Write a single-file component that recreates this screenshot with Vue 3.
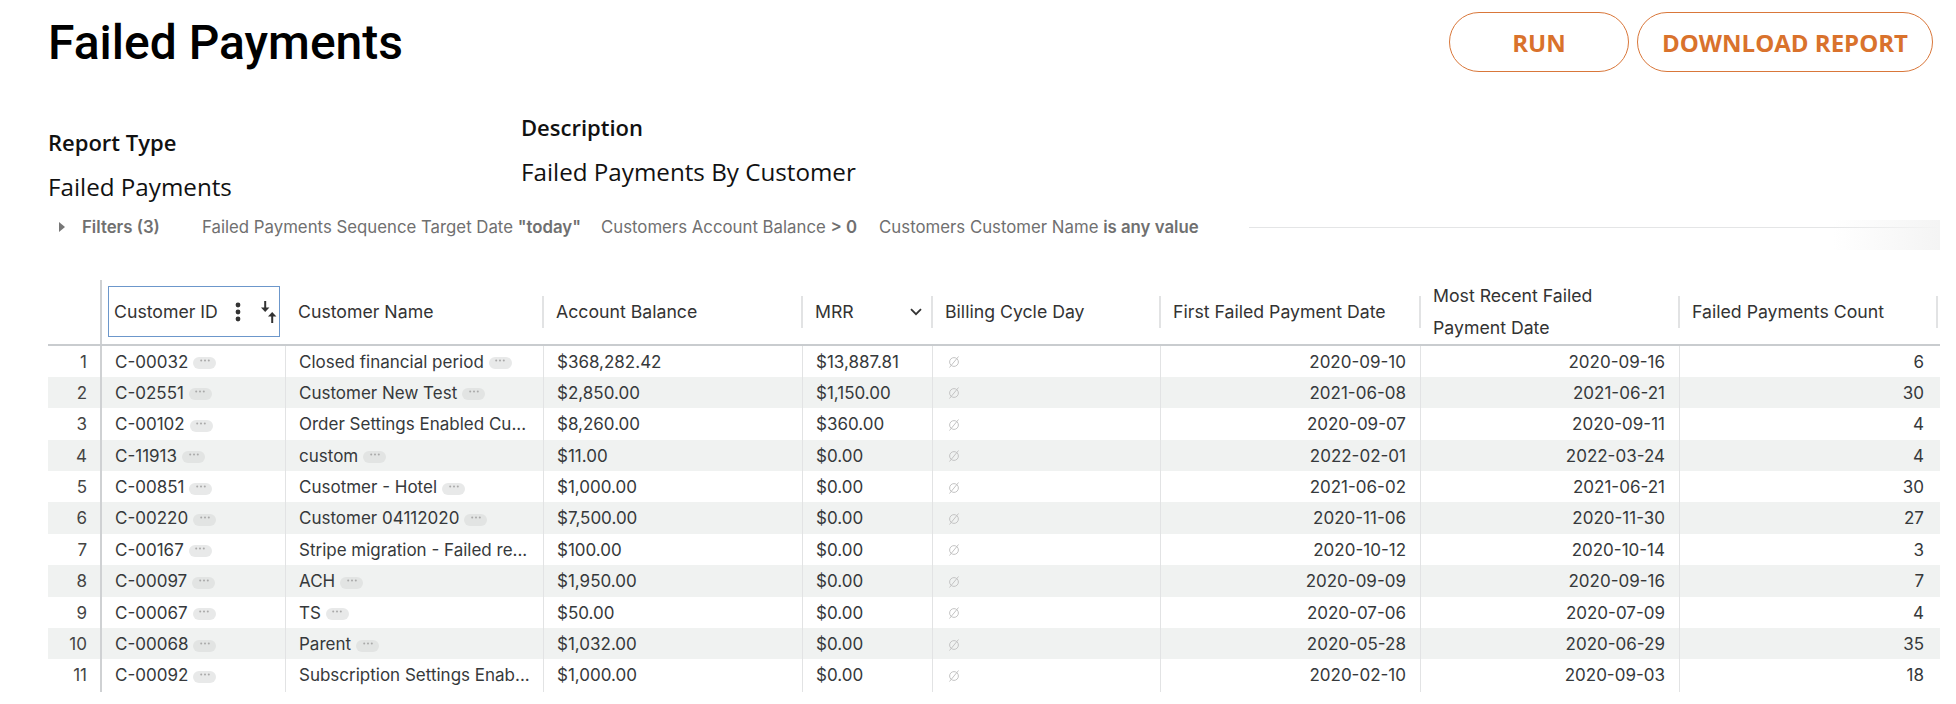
<script setup>
const columns = [
  { label: 'Customer ID' },
  { label: 'Customer Name' },
  { label: 'Account Balance' },
  { label: 'MRR', chevron: true },
  { label: 'Billing Cycle Day' },
  { label: 'First Failed Payment Date' },
  { label: 'Most Recent Failed Payment Date' },
  { label: 'Failed Payments Count' }
]

const rows = [
  ['C-00032', 'Closed financial period', '$368,282.42', '$13,887.81', '2020-09-10', '2020-09-16', 6, true],
  ['C-02551', 'Customer New Test', '$2,850.00', '$1,150.00', '2021-06-08', '2021-06-21', 30, true],
  ['C-00102', 'Order Settings Enabled Cu...', '$8,260.00', '$360.00', '2020-09-07', '2020-09-11', 4, false],
  ['C-11913', 'custom', '$11.00', '$0.00', '2022-02-01', '2022-03-24', 4, true],
  ['C-00851', 'Cusotmer - Hotel', '$1,000.00', '$0.00', '2021-06-02', '2021-06-21', 30, true],
  ['C-00220', 'Customer 04112020', '$7,500.00', '$0.00', '2020-11-06', '2020-11-30', 27, true],
  ['C-00167', 'Stripe migration - Failed re...', '$100.00', '$0.00', '2020-10-12', '2020-10-14', 3, false],
  ['C-00097', 'ACH', '$1,950.00', '$0.00', '2020-09-09', '2020-09-16', 7, true],
  ['C-00067', 'TS', '$50.00', '$0.00', '2020-07-06', '2020-07-09', 4, true],
  ['C-00068', 'Parent', '$1,032.00', '$0.00', '2020-05-28', '2020-06-29', 35, true],
  ['C-00092', 'Subscription Settings Enab...', '$1,000.00', '$0.00', '2020-02-10', '2020-09-03', 18, false]
]
</script>

<template>
  <div class="page">
    <header class="top">
      <h1 class="title">Failed Payments</h1>
      <div class="actions">
        <button class="btn run">RUN</button>
        <button class="btn download">DOWNLOAD REPORT</button>
      </div>
    </header>

    <section class="meta">
      <div class="meta-block report-type">
        <div class="meta-label">Report Type</div>
        <div class="meta-value">Failed Payments</div>
      </div>
      <div class="meta-block">
        <div class="meta-label">Description</div>
        <div class="meta-value">Failed Payments By Customer</div>
      </div>
    </section>

    <section class="filters">
      <svg class="caret" width="8" height="12" viewBox="0 0 8 12"><path d="M1 1l6 5-6 5z" fill="#777" /></svg>
      <span class="filters-count">Filters (3)</span>
      <span class="filter first">Failed Payments Sequence Target Date <b>"today"</b></span>
      <span class="filter second">Customers Account Balance <b>&gt; 0</b></span>
      <span class="filter third">Customers Customer Name <b>is any value</b></span>
      <span class="filters-line"></span>
      <span class="filters-fade"></span>
    </section>

    <section class="table">
      <div class="row head">
        <div class="index-cell"></div>
        <div
          v-for="(col, i) in columns"
          :key="col.label"
          class="head-cell"
          :class="{ selected: i === 0, wrap: i === 6 }"
        >
          <span class="head-label">{{ col.label }}</span>
          <template v-if="i === 0">
            <svg class="dots-icon" width="6" height="20" viewBox="0 0 6 20">
              <circle cx="3" cy="3" r="2.4" /><circle cx="3" cy="10" r="2.4" /><circle cx="3" cy="17" r="2.4" />
            </svg>
            <svg class="sort-icon" width="16" height="22" viewBox="0 0 16 22">
              <path d="M4.2 0v7" stroke="#333" stroke-width="2" fill="none" />
              <path d="M0 6.5h8.4L4.2 11z" fill="#333" />
              <path d="M11.2 22v-7" stroke="#333" stroke-width="2" fill="none" />
              <path d="M7 15.5h8.4L11.2 11z" fill="#333" />
            </svg>
          </template>
          <svg v-if="col.chevron" class="chevron" width="12" height="8" viewBox="0 0 12 8">
            <path d="M1 1.2l5 5 5-5" fill="none" stroke="#333" stroke-width="1.8" />
          </svg>
        </div>
      </div>

      <div v-for="(row, n) in rows" :key="row[0]" class="row body" :class="{ striped: n % 2 === 1 }">
        <div class="index-cell">{{ n + 1 }}</div>
        <div class="cell">
          <span>{{ row[0] }}</span>
          <span class="chip"><svg width="10" height="3" viewBox="0 0 10 3"><circle cx="1.2" cy="1.5" r="1" /><circle cx="5" cy="1.5" r="1" /><circle cx="8.8" cy="1.5" r="1" /></svg></span>
        </div>
        <div class="cell">
          <span>{{ row[1] }}</span>
          <span v-if="row[7]" class="chip"><svg width="10" height="3" viewBox="0 0 10 3"><circle cx="1.2" cy="1.5" r="1" /><circle cx="5" cy="1.5" r="1" /><circle cx="8.8" cy="1.5" r="1" /></svg></span>
        </div>
        <div class="cell">{{ row[2] }}</div>
        <div class="cell">{{ row[3] }}</div>
        <div class="cell">
          <svg class="null-icon" width="12" height="12" viewBox="0 0 12 12">
            <circle cx="6" cy="6" r="4.4" fill="none" stroke="#c4c4c4" stroke-width="1" />
            <path d="M1.5 11.5L10.5 .5" stroke="#c4c4c4" stroke-width="1" />
          </svg>
        </div>
        <div class="cell num">{{ row[4] }}</div>
        <div class="cell num">{{ row[5] }}</div>
        <div class="cell num">{{ row[6] }}</div>
      </div>
    </section>
  </div>
</template>

<style scoped>
.page {
  width: 1956px;
  height: 704px;
  overflow: hidden;
  background: #fff;
  font-family: Inter, "Noto Sans", sans-serif;
  color: #36393b;
}

.top {
  display: flex;
  justify-content: space-between;
  align-items: center;
  height: 60px;
  padding: 12px 23px 0 48px;
}

.title {
  margin: 0;
  font-family: Roboto, sans-serif;
  font-size: 48px;
  font-weight: 500;
  color: #000;
}

.actions {
  display: flex;
  gap: 8px;
}

.btn {
  height: 60px;
  border: 1.5px solid #d9773a;
  border-radius: 30px;
  background: #fff;
  color: #d9722c;
  font-family: "Open Sans", sans-serif;
  font-size: 24px;
  font-weight: 700;
}

.run {
  width: 180px;
}

.download {
  width: 296px;
}

.meta {
  display: flex;
  margin-top: 40px;
  padding-left: 48px;
  font-family: "Open Sans", sans-serif;
  color: #111;
}

.report-type {
  width: 473px;
  padding-top: 15px;
}

.meta-label {
  font-size: 22px;
  font-weight: 600;
  line-height: 30px;
}

.meta-value {
  margin-top: 15px;
  font-size: 24.2px;
  line-height: 30px;
}

.filters {
  position: relative;
  display: flex;
  align-items: center;
  height: 50px;
  padding-left: 58px;
  font-size: 16.8px;
  color: #707070;
}

.filters-count {
  margin-left: 16px;
  width: 120px;
  font-weight: 600;
}

.filter b {
  font-weight: 600;
}

.second {
  margin-left: 20px;
}

.third {
  margin-left: 22px;
}

.filters-line {
  flex: 1;
  height: 1px;
  margin: 0 16px 0 50px;
  background: #e4e5e6;
}

.filters-fade {
  position: absolute;
  top: 18px;
  right: 16px;
  width: 107px;
  height: 30px;
  background: linear-gradient(90deg, rgba(244, 244, 244, 0), #f4f4f4);
}

.table {
  width: 1892px;
  margin: 28px 0 0 48px;
}

.row {
  display: grid;
  grid-template-columns: 54px 184px 258px 259px 130px 228px 260px 259px 258px;
}

.head {
  height: 65.5px;
  border-bottom: 2px solid #c9cccf;
  box-sizing: border-box;
  align-items: center;
}

.index-cell {
  align-self: stretch;
  padding-right: 13px;
  border-right: 2px solid #cfd1d3;
  text-align: right;
}

.head-cell {
  position: relative;
  display: flex;
  align-items: center;
  box-sizing: border-box;
  height: 32px;
  padding: 0 12px;
  border-right: 2px solid #e2e3e4;
  font-size: 17.7px;
  color: #333;
  line-height: 32px;
}

.head-label {
  white-space: nowrap;
}

.wrap .head-label {
  max-width: 200px;
  white-space: normal;
}

.head-cell.selected {
  height: 51px;
  margin: 0 6px;
  padding: 0 5px;
  border: 1.5px solid #6c97cb;
}

.dots-icon {
  flex: none;
  margin-left: 17px;
  fill: #333;
}

.sort-icon {
  flex: none;
  margin-left: 20px;
}

.chevron {
  margin-left: auto;
  margin-right: -3px;
}

.body {
  height: 31.4px;
  font-size: 17px;
  line-height: 33px;
}

.striped {
  background: #f0f2f1;
}

.body .index-cell {
  color: #444;
}

.cell {
  display: flex;
  align-items: center;
  overflow: hidden;
  padding: 0 14px 0 13px;
  border-right: 1px solid #e2e3e4;
  white-space: nowrap;
}

.cell:last-child {
  border-right: 0;
}

.num {
  justify-content: flex-end;
}

.chip {
  display: inline-flex;
  justify-content: center;
  width: 23px;
  height: 12px;
  margin: 2px 0 0 5px;
  padding-top: 2px;
  box-sizing: border-box;
  border-radius: 6px;
  background: #e8e9e9;
  fill: #a9a9a9;
}

.striped .chip {
  background: #e2e4e3;
}

.null-icon {
  margin-left: 2px;
}
</style>

<style>
html, body {
  margin: 0;
  background: #fff;
}
</style>
